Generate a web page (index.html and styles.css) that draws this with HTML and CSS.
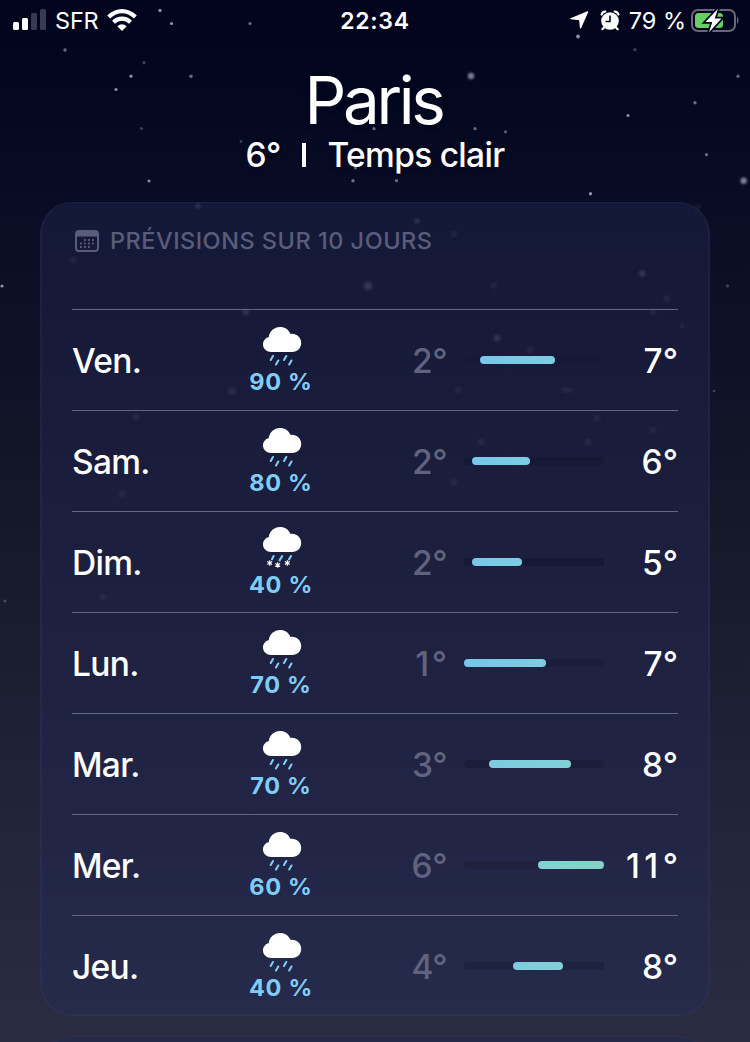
FILE: index.html
```html
<!DOCTYPE html>
<html lang="fr">
<head>
<meta charset="utf-8">
<title>Météo – Paris</title>
<link rel="stylesheet" href="styles.css">
</head>
<body>
<svg class="defs" width="0" height="0" aria-hidden="true">
  <defs>
    <g id="cloud"><path fill="#fff" d="M8.300 25C3.600 25 0 21.700 0 17.500C0 13.700 2.500 10.900 5.700 10.300C6.600 4.200 11.200 0 17 0C21.800 0 25.700 2.700 27.500 6.900C33.600 6.200 38.200 10.600 38.200 16C38.200 21.200 34.200 25 29.300 25Z"/></g>
    <symbol id="rain" viewBox="0 0 38.200 40"><use href="#cloud"/><path d="M10 29l-2.300 4M15.300 33.500l-2.300 4M23.300 29l-2.300 4M28.500 33.500l-2.300 4" stroke="#7fcdf7" stroke-width="2.100" stroke-linecap="round"/></symbol>
    <symbol id="sleet" viewBox="0 0 38.200 40"><use href="#cloud"/><path d="M10.600 29l-1.600 3.200M19.200 29l-2.600 4.400M28 29l-2 3.400" stroke="#7fcdf7" stroke-width="2.100" stroke-linecap="round"/>
      <path d="M6.700 33.200v5.600M4.300 34.600l4.800 2.800M9.100 34.600l-4.800 2.800M14.700 35.200v5.600M12.300 36.600l4.800 2.800M17.100 36.600l-4.800 2.800M24.300 33.200v5.600M21.900 34.600l4.800 2.800M26.700 34.600l-4.800 2.800" stroke="#fff" stroke-width="1.200"/></symbol>
  </defs>
</svg>
<main class="screen">
  <svg class="stars" viewBox="0 0 750 1042" fill="#b9bdd2">
    <g opacity=".75"><circle cx="160" cy="10.500" r="1.700"/><circle cx="171.500" cy="23.500" r="1.600"/><circle cx="578" cy="36.500" r="1.900"/><circle cx="131" cy="76.200" r="1.600"/><circle cx="116" cy="89.500" r="1.600"/><circle cx="590.500" cy="193.800" r="1.700"/><circle cx="628" cy="115.500" r="1.500"/><circle cx="2" cy="286" r="1.600"/><circle cx="149" cy="181" r="1.500"/></g>
    <g opacity=".55"><circle cx="250" cy="23.500" r="1.600"/><circle cx="65" cy="50" r="1.700"/><circle cx="191" cy="76.200" r="1.700"/><circle cx="738" cy="76.200" r="1.600"/><circle cx="374" cy="128.700" r="1.600"/><circle cx="475" cy="128.700" r="1.600"/><circle cx="505.500" cy="131.700" r="1.500" fill="#d59aa0"/><circle cx="355.500" cy="168" r="1.600"/><circle cx="353" cy="180.700" r="1.700"/><circle cx="396.500" cy="180.700" r="1.600"/><circle cx="695" cy="102.700" r="1.700"/><circle cx="706.500" cy="154.700" r="1.600"/></g>
    <g opacity=".3"><circle cx="144" cy="62.700" r="1.700"/><circle cx="635" cy="49.700" r="1.700"/><circle cx="241" cy="141.500" r="1.400"/><circle cx="141.500" cy="128.500" r="1.600"/><circle cx="727.500" cy="286" r="1.600"/><circle cx="5" cy="601" r="1.500"/><circle cx="714" cy="391" r="1.300"/></g>
    <g class="glow"><circle cx="471" cy="76" r="3.200"/><circle cx="743.700" cy="180.700" r="3.200"/></g>
  </svg>

  <header class="status">
    <div class="status-left">
      <svg width="34" height="22" viewBox="0 0 34 22"><g fill="#fff"><rect x="0" y="13" width="6" height="8" rx="1.500"/><rect x="9" y="9" width="6" height="12" rx="1.500"/></g><g fill="#373a50"><rect x="18" y="4" width="6" height="17" rx="1.500"/><rect x="27" y="0" width="6" height="21" rx="1.500"/></g></svg>
      <span class="carrier">SFR</span>
      <svg width="30" height="22" viewBox="0 0 30 22"><g fill="none" stroke="#fff" stroke-width="4.200"><path d="M1.700 8.100Q7.700 2.200 15 2.200Q22.300 2.200 28.300 8.100"/><path d="M6.500 13.200Q10.300 9.700 15 9.700Q19.700 9.700 23.500 13.200"/></g><path fill="#fff" d="M10.300 17.300Q15 13.300 19.700 17.300L15 22Z"/></svg>
    </div>
    <time class="clock">22:34</time>
    <div class="status-right">
      <svg width="19" height="18" viewBox="0 0 19 18"><path fill="#fff" stroke="#fff" stroke-width="1.200" stroke-linejoin="round" d="M17.600 .9L10.500 17L9.700 8.600L.8 7.700Z"/></svg>
      <svg class="alarm" width="20" height="21" viewBox="0 0 20 21"><circle cx="10" cy="11" r="8.800" fill="#fff"/><path d="M1.600 4.500Q2.500 1.800 5.300 1.500M18.400 4.500Q17.500 1.800 14.700 1.500M4 17.500l-1.700 1.700M16 17.500l1.700 1.700" stroke="#fff" stroke-width="2.200" stroke-linecap="round" fill="none"/><path d="M10 5.500v6H5.500" stroke="#03061e" stroke-width="1.600" fill="none"/></svg>
      <span class="battery-text">79 %</span>
      <svg class="battery" width="48" height="26" viewBox="0 0 48 26"><rect x="1" y="3" width="43" height="21" rx="6" fill="none" stroke="#65677a" stroke-width="2"/><path d="M46 9.500q3 3.500 0 8z" fill="#65677a"/><rect x="4" y="6" width="28" height="15" rx="3.500" fill="#65cf63"/><path d="M27 1.800L14.500 15h6.800L18 25.200L30.500 11.500h-6.800Z" fill="#fff" stroke="#03061e" stroke-width="3.500" paint-order="stroke"/></svg>
    </div>
  </header>

  <section class="place">
    <h1 class="city">Paris</h1>
    <p class="summary"><span class="now">6°</span><span class="divider"></span><span>Temps clair</span></p>
  </section>

  <section class="card">
    <svg class="card-stars" viewBox="40 202 670 814" fill="#a5a8cc">
      <g opacity=".22"><circle cx="368" cy="286" r="4"/><circle cx="642" cy="273.500" r="3"/><circle cx="198" cy="206" r="2.500"/><circle cx="246" cy="312" r="3"/><circle cx="497" cy="338" r="3"/><circle cx="417" cy="221" r="2.500"/></g>
      <g opacity=".1"><circle cx="73" cy="260" r="3"/><circle cx="454" cy="234" r="3"/><circle cx="493.500" cy="285.500" r="3"/><circle cx="667" cy="299" r="3"/><circle cx="653" cy="312" r="3"/><circle cx="682" cy="326" r="2.500"/><circle cx="530" cy="350" r="3"/><ellipse cx="567" cy="390" rx="6" ry="2.500"/><circle cx="458" cy="390" r="3"/><circle cx="597" cy="418" r="3"/><circle cx="653" cy="430" r="3"/><circle cx="481" cy="442" r="3"/><circle cx="588" cy="442" r="3"/><circle cx="454" cy="482" r="3"/><circle cx="232" cy="391" r="4"/><circle cx="122" cy="494" r="3"/><circle cx="136" cy="417" r="3"/><circle cx="103" cy="597" r="3"/><circle cx="698" cy="207" r="3"/></g>
    </svg>
    <h2 class="card-title">
      <svg width="24" height="22" viewBox="0 0 24 22"><rect x="1" y="1" width="22" height="20" rx="3" fill="none" stroke="currentColor" stroke-width="2"/><path d="M1 2h22v4.500H1z" fill="currentColor"/><path d="M9 10h11M5 13.500h15M5 17h11" stroke="currentColor" stroke-width="1.800" stroke-dasharray="1.800 2.200"/></svg>
      <span>PRÉVISIONS SUR 10 JOURS</span>
    </h2>
    <div class="days">
      <div class="row"><span class="day">Ven.</span><div class="sky"><svg class="icon"><use href="#rain"/></svg><span class="chance">90 %</span></div><span class="low">2°</span><div class="track"><i class="range" style="margin-left:16px;width:75px"></i></div><span class="high">7°</span></div>
      <div class="row"><span class="day">Sam.</span><div class="sky"><svg class="icon"><use href="#rain"/></svg><span class="chance">80 %</span></div><span class="low">2°</span><div class="track"><i class="range" style="margin-left:8px;width:58px"></i></div><span class="high">6°</span></div>
      <div class="row"><span class="day">Dim.</span><div class="sky sky-sleet"><svg class="icon"><use href="#sleet"/></svg><span class="chance">40 %</span></div><span class="low">2°</span><div class="track"><i class="range" style="margin-left:8px;width:50px"></i></div><span class="high">5°</span></div>
      <div class="row"><span class="day">Lun.</span><div class="sky"><svg class="icon"><use href="#rain"/></svg><span class="chance">70 %</span></div><span class="low spaced">1°</span><div class="track"><i class="range" style="margin-left:0;width:82px"></i></div><span class="high">7°</span></div>
      <div class="row"><span class="day">Mar.</span><div class="sky"><svg class="icon"><use href="#rain"/></svg><span class="chance">70 %</span></div><span class="low">3°</span><div class="track"><i class="range mild" style="margin-left:25px;width:82px"></i></div><span class="high">8°</span></div>
      <div class="row"><span class="day">Mer.</span><div class="sky"><svg class="icon"><use href="#rain"/></svg><span class="chance">60 %</span></div><span class="low">6°</span><div class="track"><i class="range warm" style="margin-left:74px;width:66px"></i></div><span class="high spaced">11°</span></div>
      <div class="row"><span class="day">Jeu.</span><div class="sky"><svg class="icon"><use href="#rain"/></svg><span class="chance">40 %</span></div><span class="low">4°</span><div class="track"><i class="range mild" style="margin-left:49px;width:50px"></i></div><span class="high">8°</span></div>
    </div>
  </section>
  <section class="card next"></section>
</main>
</body>
</html>
```
FILE: styles.css
```css
* { box-sizing: border-box; }
body { margin: 0; color: #fff; font-family: Inter, "Liberation Sans", sans-serif; }
h1, h2, p { margin: 0; font-weight: 400; }
svg { display: block; flex: none; }
symbol { overflow: visible; }
.defs { position: absolute; }
.screen {
  position: relative; width: 750px; height: 1042px; overflow: hidden;
  background: linear-gradient(#01041c 0, #030720 100px, #090c24 205px, #151829 520px, #22253a 820px, #2a2d42 1042px);
}
.stars { position: absolute; inset: 0; }
.glow { opacity: .65; filter: blur(1.200px); }

.status { position: relative; display: grid; grid-template-columns: 1fr auto 1fr; align-items: center; height: 40px; padding: 0 11px 0 13px; font-size: 23.500px; }
.status-left, .status-right { display: flex; align-items: center; }
.carrier { margin: 0 9px 0 8px; letter-spacing: -.200px; padding-top: 1px; }
.clock { font-weight: 600; font-size: 23px; letter-spacing: .700px; margin-left: -2px; padding-top: 1px; }
.status-right { justify-content: flex-end; }
.alarm { margin: 0 9px 0 11px; }
.battery-text { white-space: nowrap; padding-top: 1px; }
.battery { margin-left: 5px; margin-bottom: 1px; }

.place { position: relative; display: flex; flex-direction: column; align-items: center; height: 162px; padding-top: 24px; }
.city { font-size: 65.500px; line-height: 74px; letter-spacing: -3.300px; padding-right: 3px; text-shadow: 0 0 8px #0003; }
.summary { display: flex; align-items: center; font-size: 33.500px; line-height: 34px; font-weight: 500; letter-spacing: -.700px; text-shadow: 0 2px 6px #0005; }
.divider { width: 4px; height: 24px; margin: 0 22px 0 21px; background: #fff; }

.card {
  position: relative; width: 670px; height: 814px; margin: 0 auto; padding: 0 32px;
  border: 2px solid #ffffff08; border-width: 1px 2px 2px; border-radius: 32px;
  background: linear-gradient(#141838, #171a38 18%, #1d203f 50%, #262a4b) border-box;
}
.card-stars { position: absolute; inset: -1px -2px; width: 670px; height: 814px; filter: blur(1.500px); }
.card-title { position: relative; display: flex; align-items: center; gap: 11px; height: 106px; padding: 0 0 30px 1px; color: #5a5c7b; font-size: 23.500px; font-weight: 500; letter-spacing: .500px; }
.card-title span { margin-top: -2px; }
.days { position: relative; width: 606px; margin-left: -2px; }
.row { display: grid; grid-template-columns: 150px 118px 107px 17px 140px 74px; align-items: center; height: 101px; border-top: 1px solid #63657f; font-size: 33.500px; font-weight: 500; }
.day { padding-top: 1px; letter-spacing: -.700px; }
.sky { display: flex; flex-direction: column; align-items: center; align-self: start; padding-top: 17px; }
.icon { width: 38.200px; height: 40px; overflow: visible; margin-left: 2px; }
.chance { margin-top: 1px; color: #7fcdf7; font-size: 23.500px; line-height: 28px; font-weight: 700; letter-spacing: .700px; }
.sky-sleet { padding-top: 15px; }
.sky-sleet .chance { margin-top: 4px; }
.low, .high { padding-top: 1px; text-align: right; }
.low { color: #60627e; letter-spacing: -.500px; }
.spaced { letter-spacing: 4.500px; margin-right: -4.500px; }
.low.spaced { letter-spacing: 2.500px; margin-right: -2.500px; }
.track { grid-column: 5; display: flex; height: 8px; border-radius: 4px; background: #161936; }
.row:nth-child(n+4) .track { background: #1b1e3a; }
.row:nth-child(n+6) .track { background: #1f223e; }
.range { display: block; height: 8px; border-radius: 4px; background: linear-gradient(90deg, #78c6ea, #7dcde2); }
.mild { background: linear-gradient(90deg, #7ecbe1, #82d0d9); }
.warm { background: linear-gradient(90deg, #85d1d4, #85d2c5); }
.next { margin-top: 20px; background: #262a4a; }
```
